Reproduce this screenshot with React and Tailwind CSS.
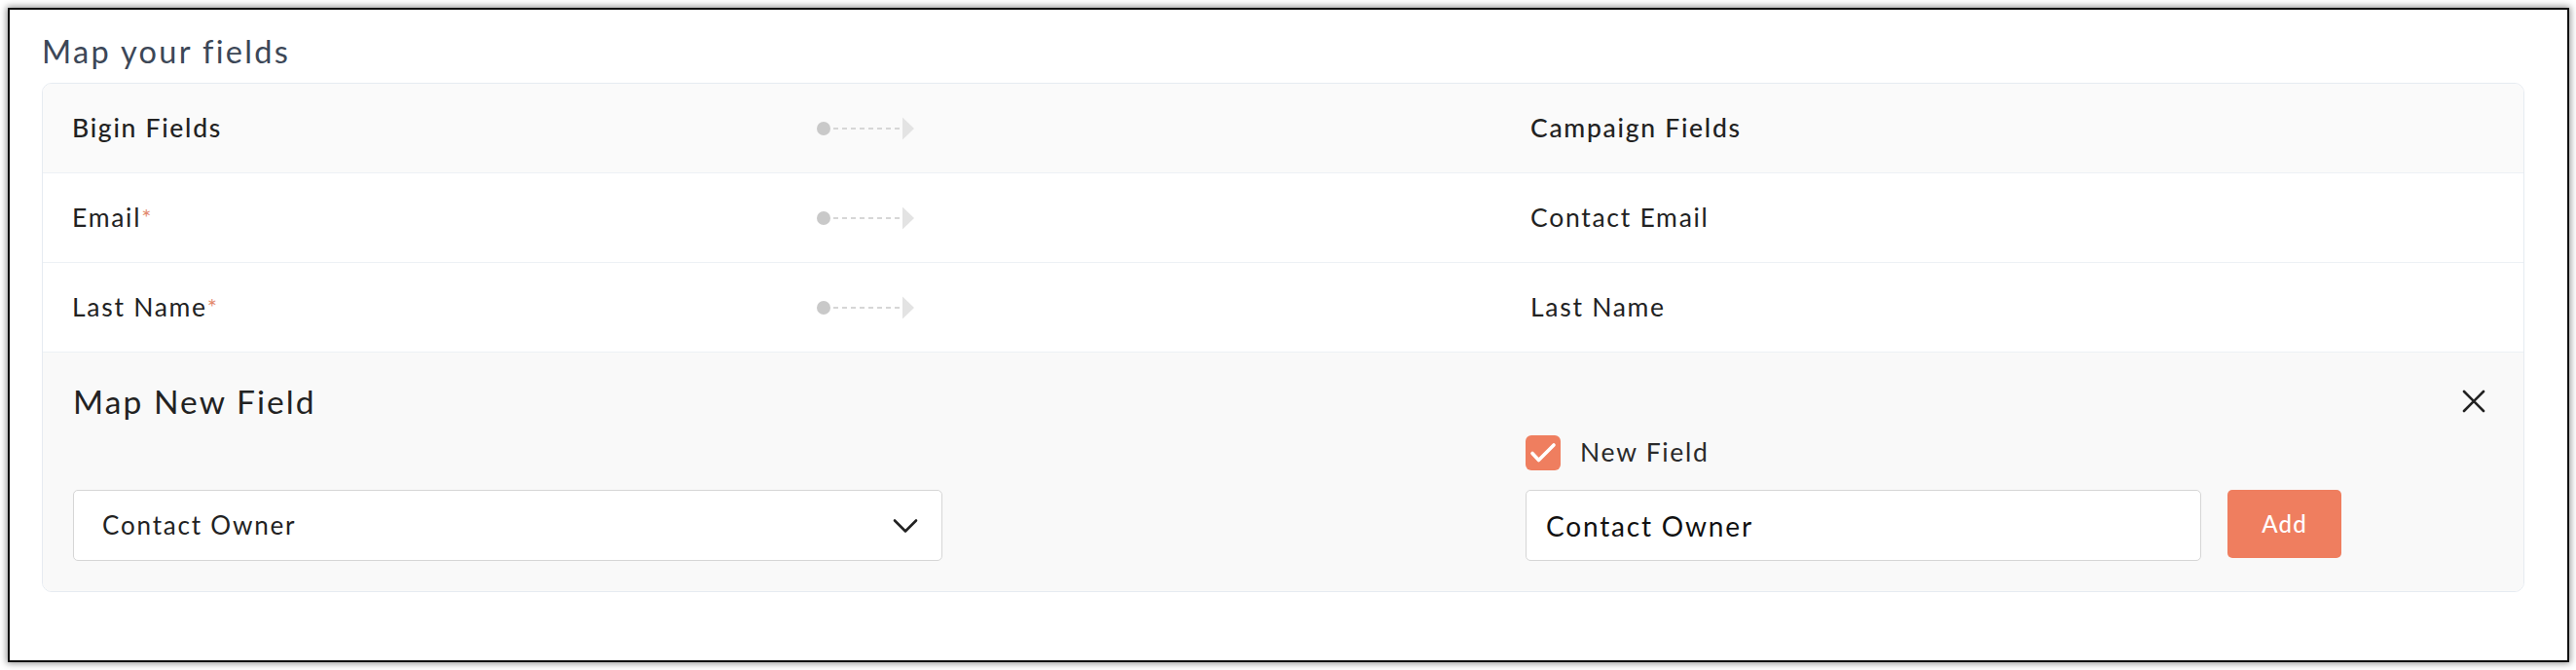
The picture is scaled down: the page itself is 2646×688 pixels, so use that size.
import React from "react";

function Connector() {
  return (
    <svg width="102" height="24" viewBox="0 0 102 24" className="block">
      <circle cx="9" cy="12" r="7" fill="#c9c9c9" />
      <line x1="19" y1="12" x2="88" y2="12" stroke="#d6d6d6" strokeWidth="2" strokeDasharray="5 4" />
      <polygon points="90,0.5 102,12 90,23.5" fill="#e3e3e3" />
    </svg>
  );
}

function Row({ left, right, header, required }) {
  return (
    <div
      className={
        "flex items-center h-[92px] pl-[30px] border-b border-[#edf1f5] " +
        (header ? "bg-[#fafafa]" : "bg-white")
      }
    >
      <div
        className={
          "w-[763px] text-[26.5px] text-[#222222] tracking-[0.065em] " + (header ? "font-medium" : "")
        }
      >
        {left}
        {required && <span className="text-[#e38a6f] text-[24px] relative top-[-1px]">*</span>}
      </div>
      <div className="w-[102px]">
        <Connector />
      </div>
      <div className="w-[633px]" />
      <div
        className={
          "flex-1 text-[26.5px] text-[#222222] tracking-[0.065em] " + (header ? "font-medium" : "")
        }
      >
        {right}
      </div>
    </div>
  );
}

export default function App() {
  return (
    <div className="w-[2646px] h-[688px] bg-white pt-[8px] pl-[8px] pr-[7px] font-['Lato',_sans-serif]">
      <div className="h-[672px] bg-white border-2 border-[#111111] shadow-[0_0_7px_1px_rgba(0,0,0,0.45)] pl-[33px] pr-[44px] pt-[24px]">
        <h1 className="text-[32.5px] leading-[38px] text-[#3c4757] tracking-[0.072em]">Map your fields</h1>
        <div className="mt-[13px] rounded-[10px] border border-[#e6ebf1] overflow-hidden">
          <Row header left="Bigin Fields" right="Campaign Fields" />
          <Row required left="Email" right="Contact Email" />
          <Row required left="Last Name" right="Last Name" />
          <div className="bg-[#f9f9f9] pl-[31px] pr-[39px] pt-[31px] pb-[31px]">
            <div className="flex items-center justify-between h-[38px]">
              <span className="text-[33.5px] text-[#222222] tracking-[0.062em]">Map New Field</span>
              <svg width="24" height="24" viewBox="0 0 24 24" className="block">
                <path d="M2 2 L22 22 M22 2 L2 22" stroke="#222222" strokeWidth="2.6" strokeLinecap="round" />
              </svg>
            </div>
            <div className="mt-[16px] flex items-end">
              <div className="w-[893px] h-[73px] bg-white border border-[#d6d6d6] rounded-[5px] flex items-center justify-between pl-[29px] pr-[24px]">
                <span className="text-[26px] text-[#222222] tracking-[0.07em]">Contact Owner</span>
                <svg width="26" height="16" viewBox="0 0 26 16" className="block">
                  <path d="M2 2.5 L13 13.5 L24 2.5" fill="none" stroke="#222222" strokeWidth="2.6" strokeLinecap="round" strokeLinejoin="round" />
                </svg>
              </div>
              <div className="ml-[599px] flex flex-col gap-[20px]">
                <div className="flex items-center h-[36px]">
                  <div className="w-[36px] h-[36px] rounded-[6px] bg-[#ef7e5f] flex items-center justify-center">
                    <svg width="36" height="36" viewBox="0 0 36 36" className="block">
                      <path d="M7 18.5 L13.5 25.5 L29 10" fill="none" stroke="#ffffff" strokeWidth="3.6" strokeLinecap="round" strokeLinejoin="round" />
                    </svg>
                  </div>
                  <span className="ml-[20px] text-[26.5px] text-[#2a2a2a] tracking-[0.065em]">New Field</span>
                </div>
                <div className="flex items-start">
                  <div className="w-[694px] h-[73px] bg-white border border-[#d6d6d6] rounded-[5px] flex items-center pl-[20px]">
                    <span className="text-[28px] text-[#111111] tracking-[0.065em]">Contact Owner</span>
                  </div>
                  <button className="ml-[27px] w-[117px] h-[70px] rounded-[5px] bg-[#ef7e5f] text-white text-[24px] font-medium tracking-[0.05em] flex items-center justify-center">
                    Add
                  </button>
                </div>
              </div>
            </div>
          </div>
        </div>
      </div>
    </div>
  );
}
